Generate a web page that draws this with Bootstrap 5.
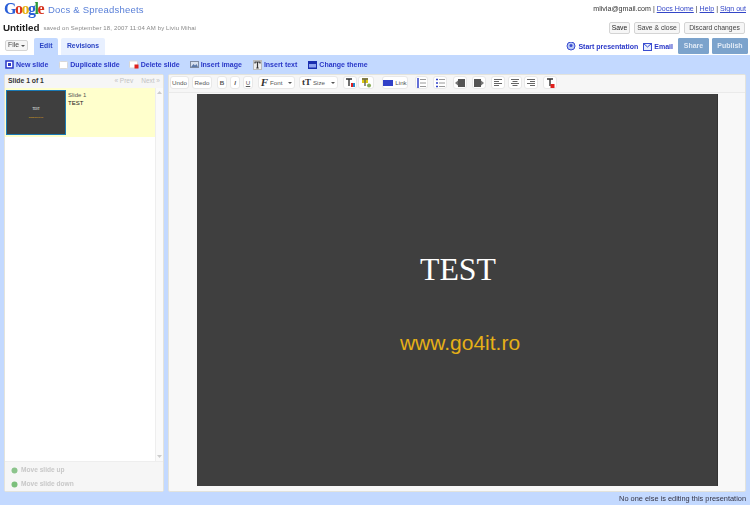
<!DOCTYPE html>
<html lang="en">
<head>
<meta charset="utf-8">
<title>Untitled - Docs &amp; Spreadsheets</title>
<link href="https://cdn.jsdelivr.net/npm/bootstrap@5.3.0/dist/css/bootstrap.min.css" rel="stylesheet">
<style>
html,body{height:100%;margin:0}
body{width:750px;height:505px;overflow:hidden;background:#fff;font-family:"Liberation Sans",Arial,sans-serif;font-size:7px;line-height:1;color:#222;filter:blur(.3px)}
a{color:#2a38c8}
svg{display:block;flex:none}
.hdr{height:55px;padding:0 2px 0 3px}
.line-a{height:21px}
.logo{font-family:"Liberation Serif",serif;font-size:16px;font-weight:700;letter-spacing:-1.5px;width:45px;padding:1px 0 0 1px}
.docs{font-size:9.5px;color:#5a80d8;letter-spacing:.2px;margin-top:5px}
.acct{font-size:7.1px;padding-top:6px;padding-right:2px;color:#333}
.acct a{color:#3346c8}
.line-b{height:17px;padding-top:1px}
.ttl{font-size:9.8px;font-weight:700;color:#222;padding-top:1px}
.sv{font-size:6px;color:#888;margin-left:4px;padding-top:3px;letter-spacing:.15px}
.gbtn{--bs-btn-padding-x:0;--bs-btn-padding-y:0;--bs-btn-font-size:6.8px;--bs-btn-line-height:1;--bs-btn-border-radius:2px;--bs-btn-color:#444;--bs-btn-bg:#f6f6f6;--bs-btn-border-color:#d4d4d4;height:12px;display:flex;align-items:center;justify-content:center}
.rbtns{margin-right:3px}
.line-c{height:17px}
.fil{width:23px;margin:2px 6px 0 2px;height:11px;gap:2px}
.caret-x{width:0;height:0;border:2px solid transparent;border-top-color:#555;border-bottom:0}
.tb{height:17px;display:flex;align-items:center;justify-content:center;font-weight:700;font-size:6.8px;color:#2a44c4;border-radius:2px 2px 0 0}
.tb1{width:24px;background:#c3d9ff;margin-right:3px}
.tb2{width:44px;background:#e8f0ff}
.lnk{font-weight:700;font-size:7px;color:#2a38c8;gap:2px}
.blu{--bs-btn-padding-x:0;--bs-btn-padding-y:0;--bs-btn-font-size:7px;--bs-btn-color:#dfe9f5;--bs-btn-bg:#7ca3cc;--bs-btn-border-color:#7ca3cc;--bs-btn-border-radius:1px;height:16px;margin-bottom:1px;display:flex;align-items:center;justify-content:center;font-weight:700}
.band{height:437px;background:#c3d9ff}
.acts{height:19px;padding-left:5px}
.acts .lnk{margin-right:10px}
.acts .lnk:nth-child(1){margin-right:11px}
.acts .lnk:nth-child(2){margin-right:9px}
.acts .lnk:nth-child(4),.acts .lnk:nth-child(5){margin-right:11px}
.panes{height:418px;padding:0 4px;gap:4px}
.pane{background:#fff;border:1px solid #e3e3dc;border-radius:2px;overflow:hidden}
.pl{width:160px}
.ph{height:13px;background:#f6f6f6;padding:0 3px 0 3px}
.ph b{font-size:6.8px;color:#333}
.nv{font-size:6.5px;color:#c2c2c2;font-weight:400}
.lst{flex:1;min-height:0}
.sel{width:150px;height:49px;background:#ffc;padding:2px 0 0 1px;gap:2px}
.thumb{width:60px;height:45px;background:#3f3f3f;border:1.500px solid #1b7ab5;color:#fff;font-size:3px}
.thumb i{font-style:normal;font-family:"Liberation Serif",serif;margin-top:3px}
.thumb u{text-decoration:none;color:#e6b017;font-size:2.500px;margin-top:6px}
.st{font-size:6px;color:#555;line-height:8px;padding-top:1px}
.st span{color:#222}
.scr{width:8px;border-left:1px solid #eee;background:#fafafa}
.mv{height:30px;background:#f6f6f6;border-top:1px solid #eee;padding:5px 0 0 6px;gap:7px}
.mv div{gap:3px;color:#c8c8c8;font-weight:700;font-size:6.600px}
.pr{flex:1;min-width:0;background:#f8f8f8}
.tools{height:18px;background:#f6f6f6;padding:1px 0 0 1px;border-bottom:1px solid #eaeaea}
.tbt{--bs-btn-padding-x:0;--bs-btn-padding-y:0;--bs-btn-font-size:6.200px;--bs-btn-color:#555;--bs-btn-bg:#fff;--bs-btn-border-color:#e8e8e8;--bs-btn-border-radius:3px;height:13px;display:flex;flex:none;align-items:center;justify-content:center;gap:2px}
.ff{font-family:"Liberation Serif",serif;color:#333;font-size:11px;font-style:italic;font-weight:700}
.tt{font-family:"Liberation Serif",serif;color:#333;font-size:9px;font-weight:700}
.stage{flex:1;padding:1px 27px 5px 28px;min-height:0}
.slide-x{height:100%;background:#3f3f3f;padding-top:159px;padding-left:2px;border-right:1px solid #333}
.s1{font-family:"Liberation Serif",serif;font-size:31.800px;color:#fff;line-height:34px}
.s2{font-size:21px;color:#e6b017;line-height:24px;margin-top:44px;padding-left:4px}
.foot{height:13px;font-size:7.400px;color:#334;padding:0 4px 0 0;line-height:13px;background:#c3d9ff}
</style>
</head>
<body>
<header class="hdr">
  <div class="d-flex line-a">
    <div class="logo"><span style="color:#2a5fd8">G</span><span style="color:#d8321e">o</span><span style="color:#e8b010">o</span><span style="color:#2a5fd8">g</span><span style="color:#2e9a3a">l</span><span style="color:#d8321e">e</span></div>
    <div class="docs">Docs &amp; Spreadsheets</div>
    <div class="acct ms-auto">mlivia@gmail.com | <a href="#">Docs Home</a> | <a href="#">Help</a> | <a href="#">Sign out</a></div>
  </div>
  <div class="d-flex line-b">
    <div class="ttl">Untitled</div>
    <div class="sv">saved on September 18, 2007 11:04 AM by Liviu Mihai</div>
    <div class="ms-auto d-flex gap-1 rbtns">
      <button class="btn gbtn" style="width:21px;color:#222">Save</button>
      <button class="btn gbtn" style="width:46px">Save &amp; close</button>
      <button class="btn gbtn" style="width:61px">Discard changes</button>
    </div>
  </div>
  <div class="d-flex line-c">
    <button class="btn gbtn fil">File <span class="caret-x"></span></button>
    <div class="tb tb1">Edit</div>
    <div class="tb tb2">Revisions</div>
    <div class="ms-auto d-flex align-items-center">
      <a class="lnk d-flex align-items-center text-decoration-none" href="#" style="margin-right:5px">
        <svg width="10" height="9" viewBox="0 0 10 9"><circle cx="5" cy="4" r="4" fill="#b8c8f4" stroke="#3a4cd0"/><circle cx="5" cy="3.500" r="1.500" fill="#3a4cd0"/></svg>Start presentation</a>
      <a class="lnk d-flex align-items-center text-decoration-none" href="#" style="margin-right:5px">
        <svg width="9" height="8" viewBox="0 0 9 8"><rect x=".5" y=".5" width="8" height="7" fill="#e8eefc" stroke="#3a4cd0"/><path d="M.5.5 4.500 4l4-3.500" fill="none" stroke="#3a4cd0"/></svg>Email</a>
      <button class="btn blu" style="width:31px;margin-right:3px">Share</button>
      <button class="btn blu" style="width:36px">Publish</button>
    </div>
  </div>
</header>
<main class="band">
  <div class="acts d-flex align-items-center">
    <a class="lnk d-flex align-items-center text-decoration-none" href="#">
      <svg width="9" height="10" viewBox="0 0 9 10"><rect x="1" y="1" width="7" height="7" fill="#fff" stroke="#2a38c8" stroke-width="1.500"/><rect x="3" y="3" width="3" height="3" fill="#2a38c8"/></svg>New slide</a>
    <a class="lnk d-flex align-items-center text-decoration-none" href="#">
      <svg width="9" height="9" viewBox="0 0 9 9"><rect x=".5" y="1.500" width="8" height="7" rx="1" fill="#fff" stroke="#d8d8d8"/></svg>Duplicate slide</a>
    <a class="lnk d-flex align-items-center text-decoration-none" href="#">
      <svg width="10" height="9" viewBox="0 0 10 9"><rect x=".5" y="1" width="8" height="7" rx="1" fill="#fff" stroke="#d8d8d8"/><rect x="5.500" y="4.500" width="4" height="4" fill="#e0201c"/></svg>Delete slide</a>
    <a class="lnk d-flex align-items-center text-decoration-none" href="#">
      <svg width="9" height="9" viewBox="0 0 9 9"><rect x=".5" y="1.500" width="8" height="6" fill="#d5dfee" stroke="#7d8aa0"/><path d="M1 7 3.500 4 5 5.500 6.500 4 8 7Z" fill="#5a78a8"/></svg>Insert image</a>
    <a class="lnk d-flex align-items-center text-decoration-none" href="#">
      <svg width="9" height="10" viewBox="0 0 9 10"><rect x=".5" y=".5" width="8" height="9" fill="#eee" stroke="#bbb"/><path d="M2 3.500V2h5v1.500M4.500 2v6M3.300 8h2.400" fill="none" stroke="#333" stroke-width="1.200"/></svg>Insert text</a>
    <a class="lnk d-flex align-items-center text-decoration-none" href="#">
      <svg width="9" height="8" viewBox="0 0 9 8"><rect width="9" height="8" fill="#1a2fb0"/><rect x="1" y="3" width="7" height="3.500" fill="#8ea4f0"/></svg>Change theme</a>
  </div>
  <div class="panes d-flex">
    <section class="pane pl d-flex flex-column">
      <div class="ph d-flex align-items-center justify-content-between">
        <b>Slide 1 of 1</b>
        <span class="nv d-flex gap-2"><span>« Prev</span><span>Next »</span></span>
      </div>
      <div class="lst d-flex">
        <div class="sel d-flex">
          <div class="thumb d-flex flex-column align-items-center justify-content-center"><i>TEST</i><u>www.go4it.ro</u></div>
          <div class="st">Slide 1<br><span>TEST</span></div>
        </div>
        <div class="scr ms-auto d-flex flex-column justify-content-between align-items-center" style="padding:3px 0">
          <svg width="5" height="3" viewBox="0 0 5 3"><path d="M0 3 2.500 0 5 3Z" fill="#ccc"/></svg>
          <svg width="5" height="3" viewBox="0 0 5 3"><path d="M0 0 2.500 3 5 0Z" fill="#ccc"/></svg>
        </div>
      </div>
      <div class="mv d-flex flex-column">
        <div class="d-flex align-items-center"><svg width="7" height="7" viewBox="0 0 7 7"><circle cx="3.500" cy="3.500" r="3" fill="#8cc48c"/></svg>Move slide up</div>
        <div class="d-flex align-items-center"><svg width="7" height="7" viewBox="0 0 7 7"><circle cx="3.500" cy="3.500" r="3" fill="#7cc07c"/></svg>Move slide down</div>
      </div>
    </section>
    <section class="pane pr d-flex flex-column">
      <div class="tools d-flex">
        <button class="btn tbt" style="width:19px;margin-right:3px">Undo</button>
        <button class="btn tbt" style="width:20px;margin-right:5px">Redo</button>
        <button class="btn tbt fw-bold" style="width:10px;margin-right:3px">B</button>
        <button class="btn tbt fst-italic fw-bold" style="width:10px;margin-right:3px">I</button>
        <button class="btn tbt text-decoration-underline" style="width:10px;margin-right:5px">U</button>
        <button class="btn tbt" style="width:37px;margin-right:4px"><span class="ff">F</span>Font<span class="caret-x ms-1"></span></button>
        <button class="btn tbt" style="width:39px;margin-right:5px"><span class="tt">tT</span>Size<span class="caret-x ms-1"></span></button>
        <button class="btn tbt" style="width:14px;margin-right:1px"><svg width="11" height="10" viewBox="0 0 11 10"><path d="M1 1h6M4 1v7" stroke="#333" stroke-width="1.400" fill="none"/><rect x="6" y="5" width="2" height="4" fill="#d22"/><rect x="8" y="5" width="2" height="4" fill="#28c"/></svg></button>
        <button class="btn tbt" style="width:16px;margin-right:8px"><svg width="11" height="10" viewBox="0 0 11 10"><rect x="1" y="0" width="6" height="5" fill="#dcc810"/><path d="M1 1h6M4 1v7" stroke="#665" stroke-width="1.400" fill="none"/><circle cx="8" cy="7.500" r="2" fill="#8a5"/></svg></button>
        <button class="btn tbt" style="width:26px;margin-right:7px"><svg width="10" height="6" viewBox="0 0 10 6"><rect width="10" height="6" fill="#3140c8"/></svg>Link</button>
        <button class="btn tbt" style="width:13px;margin-right:5px"><svg width="9" height="10" viewBox="0 0 9 10"><path d="M1 0v10" stroke="#3140c8" stroke-width="1.500"/><path d="M3 1.500h6M3 5h6M3 8.500h6" stroke="#999"/></svg></button>
        <button class="btn tbt" style="width:14px;margin-right:6px"><svg width="9" height="10" viewBox="0 0 9 10"><path d="M0 1.500h2M0 5h2M0 8.500h2" stroke="#3140c8" stroke-width="1.500"/><path d="M3 1.500h6M3 5h6M3 8.500h6" stroke="#999"/></svg></button>
        <button class="btn tbt" style="width:14px;margin-right:5px"><svg width="10" height="8" viewBox="0 0 10 8"><rect x="3" width="7" height="8" fill="#555"/><path d="M0 4 3 1.500v5Z" fill="#777"/></svg></button>
        <button class="btn tbt" style="width:14px;margin-right:5px"><svg width="10" height="8" viewBox="0 0 10 8"><rect width="7" height="8" fill="#555"/><path d="M10 4 7 1.500v5Z" fill="#777"/></svg></button>
        <button class="btn tbt" style="width:14px;margin-right:3px"><svg width="8" height="7" viewBox="0 0 8 7"><path d="M0 .5h8M0 2.500h5M0 4.500h8M0 6.500h5" stroke="#666"/></svg></button>
        <button class="btn tbt" style="width:14px;margin-right:2px"><svg width="8" height="7" viewBox="0 0 8 7"><path d="M0 .5h8M1.500 2.500h5M0 4.500h8M1.500 6.500h5" stroke="#666"/></svg></button>
        <button class="btn tbt" style="width:14px;margin-right:5px"><svg width="8" height="7" viewBox="0 0 8 7"><path d="M0 .5h8M3 2.500h5M0 4.500h8M3 6.500h5" stroke="#666"/></svg></button>
        <button class="btn tbt" style="width:14px"><svg width="9" height="10" viewBox="0 0 9 10"><path d="M1 1h6M4 1v7" stroke="#333" stroke-width="1.400" fill="none"/><rect x="4.500" y="6" width="4" height="4" fill="#e0201c"/></svg></button>
      </div>
      <div class="stage">
        <div class="slide-x text-center">
          <div class="s1">TEST</div>
          <div class="s2">www.go4it.ro</div>
        </div>
      </div>
    </section>
  </div>
</main>
<footer class="foot text-end">No one else is editing this presentation</footer>
</body>
</html>
